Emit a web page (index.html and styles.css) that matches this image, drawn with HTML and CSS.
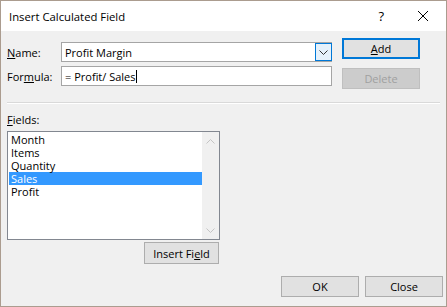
FILE: index.html
```html
<!DOCTYPE html>
<html lang="en">
<head>
    <meta charset="UTF-8">
    <title>Insert Calculated Field</title>
    <link rel="stylesheet" href="styles.css">
</head>
<body>
    <div class="dialog">
        <div class="titlebar">
            <span class="title">Insert Calculated Field</span>
            <span class="help">?</span>
            <svg class="close-x" width="12" height="12" viewBox="0 0 12 12">
                <path d="M1 1 L11 11 M11 1 L1 11" stroke="#000" stroke-width="1" fill="none"/>
            </svg>
        </div>
        <div class="content">
            <div class="top">
                <div class="form">
                    <div class="row name-row">
                        <label class="lbl"><u>N</u>ame:</label>
                        <div class="combo">
                            <span class="value">Profit Margin</span>
                            <span class="drop">
                                <svg width="9" height="5" viewBox="0 0 9 5">
                                    <path d="M0.5 0.5 L4.5 4.5 L8.5 0.5" stroke="#333" fill="none"/>
                                </svg>
                            </span>
                        </div>
                    </div>
                    <div class="row formula-row">
                        <label class="lbl">For<u>m</u>ula:</label>
                        <div class="textbox">
                            <span class="value">= Profit/ Sales</span><span class="caret"></span>
                        </div>
                    </div>
                </div>
                <div class="side-buttons">
                    <button class="btn btn-default"><u>A</u>dd</button>
                    <button class="btn btn-disabled">Delete</button>
                </div>
            </div>
            <div class="separator"></div>
            <div class="fields-label"><u>F</u>ields:</div>
            <div class="listbox">
                <ul class="items">
                    <li>Month</li>
                    <li>Items</li>
                    <li>Quantity</li>
                    <li class="selected">Sales</li>
                    <li>Profit</li>
                </ul>
                <div class="scrollbar">
                    <svg width="9" height="5" viewBox="0 0 9 5">
                        <path d="M0.5 4.5 L4.5 0.5 L8.5 4.5" stroke="#c4c4c4" fill="none"/>
                    </svg>
                    <svg width="9" height="5" viewBox="0 0 9 5">
                        <path d="M0.5 0.5 L4.5 4.5 L8.5 0.5" stroke="#c4c4c4" fill="none"/>
                    </svg>
                </div>
            </div>
            <div class="insert-row">
                <button class="btn btn-insert">Insert Fi<u>e</u>ld</button>
            </div>
            <div class="footer">
                <button class="btn">OK</button>
                <button class="btn">Close</button>
            </div>
        </div>
    </div>
</body>
</html>
```

FILE: styles.css
```css
body {
    margin: 0;
    font-family: "Open Sans", "Noto Sans", sans-serif;
    font-size: 11px;
    color: #000;
}
.dialog {
    width: 447px;
    height: 307px;
    box-sizing: border-box;
    border: 1px solid #ab9c8f;
    background-color: #f0f0f0;
    display: flex;
    flex-direction: column;
}
.titlebar {
    height: 30px;
    background-color: #fff;
    display: flex;
    align-items: center;
    padding-left: 8px;
}
.title {
    font-size: 11.3px;
    flex: 1;
}
.help {
    font-size: 13px;
    margin-right: 33px;
}
.close-x {
    margin-right: 17px;
}
.content {
    flex: 1;
    padding: 0 6px;
}
.top {
    display: flex;
}
.form {
    width: 325px;
    padding-top: 11px;
}
.row {
    display: flex;
    align-items: center;
}
.formula-row {
    margin-top: 4px;
}
.lbl {
    width: 54px;
}
.combo, .textbox {
    width: 271px;
    height: 20px;
    box-sizing: border-box;
    border: 1px solid #a5a5a5;
    background-color: #fff;
    display: flex;
    align-items: center;
    padding-left: 3px;
}
.combo .value {
    flex: 1;
}
.drop {
    width: 17px;
    height: 18px;
    box-sizing: border-box;
    border: 1px solid #0078d7;
    background-color: #e5f1fb;
    display: flex;
    align-items: center;
    justify-content: center;
    margin-right: -1px;
}
.caret {
    display: inline-block;
    width: 1px;
    height: 13px;
    background-color: #000;
}
.side-buttons {
    margin-left: 10px;
    padding-top: 7px;
    display: flex;
    flex-direction: column;
    gap: 9px;
}
.btn {
    font-family: inherit;
    font-size: 11px;
    width: 78px;
    height: 21px;
    box-sizing: border-box;
    border: 1px solid #adadad;
    background-color: #e1e1e1;
    color: #000;
    padding: 0;
    margin: 0;
}
.btn-default {
    border: 2px solid #0078d7;
}
.btn-disabled {
    background-color: #cccccc;
    border-color: #bfbfbf;
    color: #a0a0a0;
}
.separator {
    margin-top: 13px;
    height: 1px;
    background-color: #d9d9d9;
    border-bottom: 1px solid #fff;
    width: 433px;
}
.fields-label {
    margin-top: 9px;
    line-height: 14px;
}
.listbox {
    margin-top: 4px;
    width: 213px;
    height: 109px;
    box-sizing: border-box;
    border: 1px solid #828790;
    background-color: #fff;
    display: flex;
}
.items {
    list-style: none;
    margin: 1px 0 0 1px;
    padding: 0;
    flex: 1;
}
.items li {
    height: 13px;
    line-height: 13px;
    padding-left: 2px;
}
.items li.selected {
    background-color: #3399ff;
    color: #fff;
}
.scrollbar {
    width: 17px;
    background-color: #f0f0f0;
    display: flex;
    flex-direction: column;
    justify-content: space-between;
    align-items: center;
    padding: 7px 0 6px;
}
.insert-row {
    display: flex;
    padding-left: 137px;
    margin-top: 2px;
}
.btn-insert {
    width: 75px;
    height: 22px;
}
.footer {
    display: flex;
    justify-content: flex-end;
    gap: 6px;
    margin-top: 12px;
    margin-right: -3px;
}
```
